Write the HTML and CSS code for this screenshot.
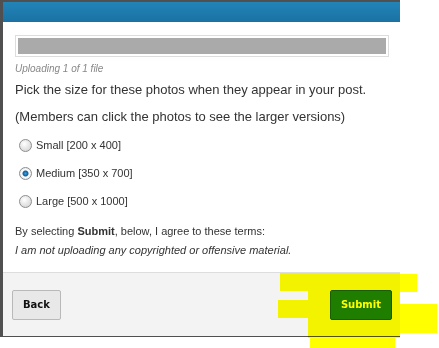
FILE: index.html
```html
<!DOCTYPE html>
<html>
<head>
    <meta charset="utf-8">
    <title>Upload Photos</title>
    <link rel="stylesheet" href="styles.css">
</head>
<body>
    <div class="overlay">
        <div class="dialog">
            <div class="dialog-header"></div>

            <div class="dialog-body">
                <div class="progress">
                    <div class="progress-bar"></div>
                </div>
                <p class="status">Uploading 1 of 1 file</p>
                <p class="intro">Pick the size for these photos when they appear in your post.</p>
                <p class="intro">(Members can click the photos to see the larger versions)</p>

                <div class="sizes">
                    <label><input type="radio" name="size" value="small"> Small [200 x 400]</label>
                    <label><input type="radio" name="size" value="medium" checked> Medium [350 x 700]</label>
                    <label><input type="radio" name="size" value="large"> Large [500 x 1000]</label>
                </div>

                <p class="terms">By selecting <b>Submit</b>, below, I agree to these terms:</p>
                <p class="terms"><i>I am not uploading any copyrighted or offensive material.</i></p>
            </div>

            <div class="dialog-footer">
                <button type="button" class="back-btn">Back</button>
                <button type="button" class="submit-btn">Submit</button>
            </div>
        </div>
    </div>

    <!-- highlighter marks drawn over the submit button -->
    <div class="marker">
        <span class="m1"></span>
        <span class="m2"></span>
        <span class="m3"></span>
        <span class="m4"></span>
        <span class="m5"></span>
        <span class="m6"></span>
    </div>
</body>
</html>
```

FILE: styles.css
```css
body {
    margin: 0;
    background-color: #fff;
    font-family: "Liberation Sans", Arial, sans-serif;
    color: #333;
}
.overlay {
    width: 397px;
    padding: 2px 0 1px 3px;
    background-color: #505050;
}
.dialog {
    background-color: #fff;
}
.dialog-header {
    height: 20px;
    background: linear-gradient(#2384b8, #1a72a3);
}
.dialog-body {
    padding: 13px 11px 12px 12px;
}
.progress {
    border: 1px solid #ddd;
    padding: 2px;
}
.progress-bar {
    height: 16px;
    background-color: #aaa;
}
.dialog-body p {
    margin: 0;
}
.status {
    margin-top: 6px !important;
    font-size: 10px;
    font-style: italic;
    color: #888;
}
.intro {
    margin-top: 8px !important;
    font-size: 13px;
    line-height: 15px;
}
.intro + .intro {
    margin-top: 12px !important;
}
.sizes {
    margin-top: 7px;
}
.sizes label {
    display: flex;
    align-items: center;
    height: 28px;
    font-size: 11px;
}
.sizes input {
    -webkit-appearance: none;
    appearance: none;
    width: 13px;
    height: 13px;
    margin: 0 4px 0 4px;
    border: 1px solid #8d8d8d;
    border-radius: 50%;
    background: radial-gradient(circle at 40% 35%, #fff, #dcdcdc 70%, #c8c8c8);
}
.sizes input:checked {
    background: radial-gradient(circle, #3ea0e0 0, #0d5e9c 2.5px, #fff 3.5px, #e6e6e6 6px);
}
.terms {
    font-size: 11px;
    line-height: 19px;
}
.sizes + .terms {
    margin-top: 7px !important;
}
.dialog-footer {
    display: flex;
    justify-content: space-between;
    align-items: center;
    height: 63px;
    padding: 0 8px 0 9px;
    border-top: 1px solid #ddd;
    background-color: #f3f3f3;
}
.dialog-footer button {
    height: 30px;
    padding: 0 10px;
    border-radius: 2px;
    font-family: "DejaVu Sans", Verdana, sans-serif;
    font-size: 10px;
    font-weight: bold;
    cursor: pointer;
}
.back-btn {
    border: 1px solid #b9b9b9;
    background-color: #e8e8e8;
    color: #111;
}
.submit-btn {
    border: 1px solid #165a00;
    background-color: #1f7d00;
    color: #fff;
}

/* yellow highlighter, blended like ink over the screenshot */
.marker span {
    position: absolute;
    background-color: #ffff00;
    mix-blend-mode: multiply;
}
.m1 { left: 280px; top: 273px; width: 120px; height: 18px; }
.m2 { left: 400px; top: 274px; width: 17px; height: 18px; }
.m3 { left: 278px; top: 300px; width: 32px; height: 18px; }
.m4 { left: 308px; top: 290px; width: 92px; height: 48px; }
.m5 { left: 400px; top: 304px; width: 37px; height: 29px; }
.m6 { left: 310px; top: 337px; width: 85px; height: 11px; }
```
